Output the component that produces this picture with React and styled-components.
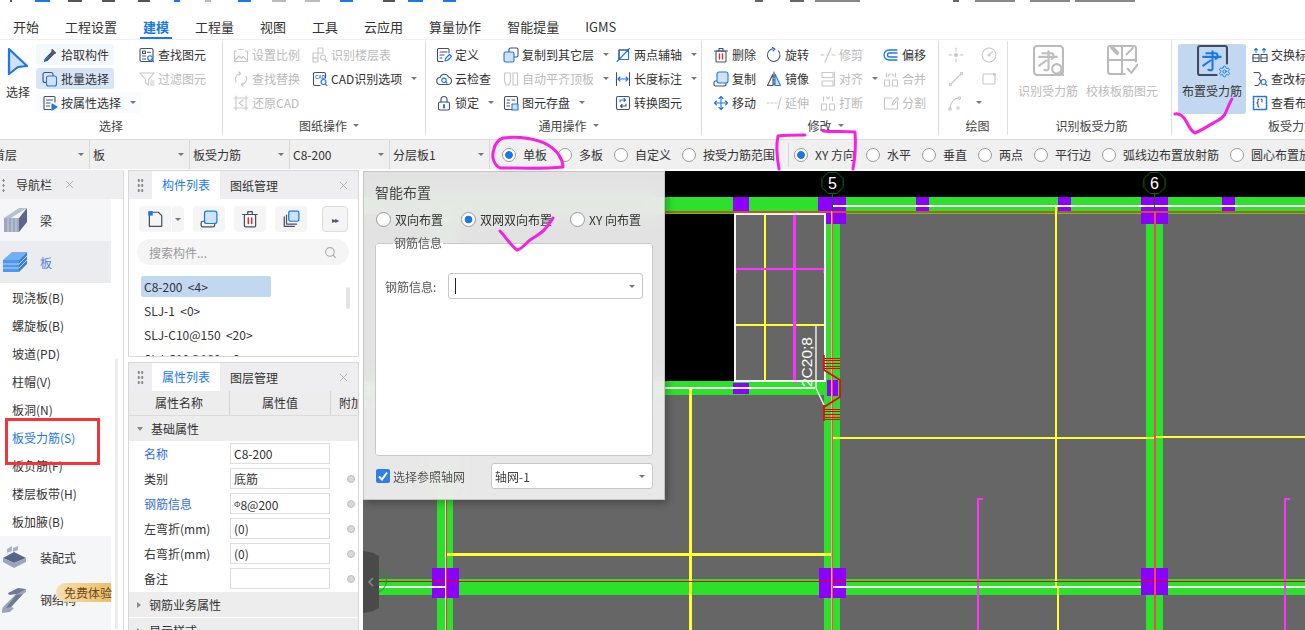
import React from 'react'
import styled, { createGlobalStyle } from 'styled-components'
import { X, Search, Settings } from 'lucide-react'

const GlobalStyle = createGlobalStyle`
  html, body { margin: 0; padding: 0; background: #fff; }
  body { font-family: "Noto Sans CJK SC", "Noto Sans", sans-serif; font-size: 12px; color: #333; }
  * { box-sizing: border-box; }
`

const BLUE = '#1a78e8'
const PALE = '#cfe2f8'

const Svg = ({ children, size = 16, box = 16 }) => (
  <svg width={size} height={size} viewBox={`0 0 ${box} ${box}`} fill="none" stroke="currentColor" strokeWidth="1.1" strokeLinecap="round" strokeLinejoin="round">
    {children}
  </svg>
)

const icons = {
  pick: <><path d="M10 2.5l3.5 3.5-2 1-6.5 6.5-2.5.8.8-2.5L10 5z" fill="#56607a" /><path d="M3 13l3-3" stroke={BLUE} strokeWidth="1.6" /></>,
  batch: <><rect x="1" y="1.5" width="10" height="10" rx="2" /><rect x="4.5" y="5" width="10" height="10" rx="2" fill={PALE} stroke={BLUE} /></>,
  attr: <><path d="M13 7V2.5a1 1 0 0 0-1-1H3a1 1 0 0 0-1 1v11a1 1 0 0 0 1 1h6" /><path d="M4.5 5h6M4.5 8h3.5M4.5 11h3" /><path d="M10 9l5 3-5 3z" fill={BLUE} stroke={BLUE} /></>,
  find: <><rect x="1" y="1.5" width="13" height="13" rx="1.5" /><rect x="3.5" y="4" width="3" height="2.5" /><path d="M8.5 5.2h3M3.5 9h3M3.5 12h3" /><circle cx="11" cy="11" r="2.3" fill="#fff" stroke={BLUE} /><path d="M12.8 12.8l1.8 1.8" stroke={BLUE} /></>,
  filter: <><path d="M1 2h14L9.5 8.5V14L6.5 12V8.5z" /><path d="M11.5 10h3.5M11.5 12h3.5M11.5 14h3.5" /></>,
  scale: <><path d="M1.5 4v10.5h13V4M1.5 4h2M12.5 4h2M6 2.5h4" /><path d="M2 13l4-4 2.5 2.5 2-2 3 3.5" /></>,
  replace: <><path d="M3 11a6 6 0 0 1 4-8.5M13 5a6 6 0 0 1-4 8.5" /><path d="M6 1l1.5 1.5L6 4M10 12l-1.5 1.5L10 15" /></>,
  restore: <><path d="M3 1v14M13 1v14M1 3h14M1 13h14" /><path d="M10 5L6 8l4 3" /></>,
  floorTable: <><rect x="6" y="1" width="5" height="5" /><rect x="1" y="6" width="5" height="5" /><rect x="1" y="11" width="5" height="4" /><circle cx="11" cy="10.5" r="2.5" /><path d="M13 12.5l2 2" /></>,
  cadOpt: <><path d="M13.5 7V3a1.5 1.5 0 0 0-1.5-1.5H3A1.5 1.5 0 0 0 1.5 3v10A1.5 1.5 0 0 0 3 14.5h5" /><text x="3" y="7.5" fontSize="4.6" fontWeight="700" fill={BLUE} stroke="none" fontFamily="Liberation Sans, sans-serif">CAD</text><circle cx="11.5" cy="11" r="2.5" stroke={BLUE} /><path d="M13.3 12.9l1.7 1.7" stroke={BLUE} /></>,
  define: <><path d="M13 6V2.5a1 1 0 0 0-1-1H2.5a1 1 0 0 0-1 1v11a1 1 0 0 0 1 1H7" /><path d="M4 5h7M4 8h4M4 11h2" /><path d="M9 14l.5-2.5 4-4 2 2-4 4z" stroke={BLUE} /></>,
  cloud: <><path d="M4.5 13.5a3.5 3.5 0 0 1-.5-7A4.5 4.5 0 0 1 12.5 6a3.8 3.8 0 0 1-.5 7.5z" /><circle cx="8" cy="9.3" r="2.2" stroke={BLUE} /><path d="M9.7 11l1.3 1.2" stroke={BLUE} /></>,
  lock: <><path d="M5 7V4.5a3 3 0 0 1 6 0V7" /><rect x="2.5" y="7" width="11" height="8" rx="1.5" /><path d="M8 10v2.5" stroke={BLUE} strokeWidth="2" /></>,
  copyFloor: <><rect x="6" y="1" width="9" height="9" rx="1.5" /><rect x="1" y="5" width="10" height="10" rx="1.5" fill={PALE} stroke={BLUE} /></>,
  autoAlign: <><path d="M1.5 2h6v8l-1.5 4H3L1.5 10zM10 2h4.5v12H10z" /></>,
  save: <><rect x="1.5" y="1.5" width="13" height="13" rx="1.5" /><path d="M4 5h2.5M9 5h3M4 8h2.5M4 11h2.5" /><rect x="9" y="9" width="6" height="6" fill={PALE} stroke={BLUE} /></>,
  twoPoint: <><path d="M4 3h9.5v9.5H4zM2 14.5L14.5 1.5" stroke={BLUE} /><path d="M4 3h9.5M4 12.5V3" /></>,
  length: <><path d="M1.5 1.5v13M14.5 1.5v13" /><path d="M3 8h10M5 6L3 8l2 2M11 6l2 2-2 2" stroke={BLUE} /></>,
  convert: <><rect x="1.5" y="1.5" width="13" height="13" rx="1.5" /><path d="M5 7V5h5M9 3.5L10.5 5 9 6.5" stroke={BLUE} /><path d="M11 9v2H6M7 9.5L5.5 11 7 12.5" /></>,
  del: <><rect x="3" y="4" width="10" height="11" rx="1" /><path d="M1.5 4h13M6 4V1.5h4V4" /><path d="M6.5 7v5M9.5 7v5" stroke="#e5262c" strokeWidth="1.3" /></>,
  rotate: <><path d="M12.5 4A6.3 6.3 0 1 1 8 1.8" /><path d="M6.5 0.5L9 2 7 4" stroke={BLUE} /></>,
  trim: <><path d="M5 15L11 1M1 8h3M7 8h2M12 8h3" /></>,
  copy: <><path d="M4 10H2.5A1.5 1.5 0 0 0 1 11.5v2A1.5 1.5 0 0 0 2.5 15h9a1.5 1.5 0 0 0 1.5-1.500V12" /><rect x="4" y="1" width="11" height="11" rx="2" fill={PALE} stroke={BLUE} /></>,
  mirror: <><path d="M7 3L1.500 14.500H7z" /><path d="M9 3l5.500 11.500H9z" fill={PALE} stroke={BLUE} /><path d="M8 1v14" strokeDasharray="2 1.500" /></>,
  align: <><rect x="2" y="1.500" width="11" height="5" /><rect x="2" y="10" width="11" height="5" /><path d="M14.500 1v14" /></>,
  move: <g stroke={BLUE}><path d="M8 1.500v13M1.500 8h13M6 3.500L8 1.500l2 2M6 12.500l2 2 2-2M3.500 6L1.500 8l2 2M12.500 6l2 2-2 2" /></g>,
  extend: <><path d="M1 8h2M5 8h2M9 8h2M12 14L15 2" /></>,
  breakIt: <><rect x="1.500" y="9" width="5" height="6" /><rect x="9.500" y="9" width="5" height="6" /><path d="M3.500 6V2M12.500 6V2M6.500 2L8 4M9.500 2L8 4" /></>,
  offset: <g stroke={BLUE}><path d="M14 3H6a5 5 0 0 0 0 10h8" strokeWidth="1.300" /><path d="M14 6H6.500a2 2 0 0 0 0 4H14" strokeWidth="1.300" /></g>,
  merge: <><rect x="1.500" y="9" width="5" height="6" /><rect x="9.500" y="9" width="5" height="6" /><path d="M3.500 2v4M12.500 2v4M5 5l2-2M11 5L9 3" /></>,
  split: <><path d="M9 3H1.500v11h13V7" /><path d="M9 10l1-3 4-4.500 1.500 1.500L11 9z" /></>,
  point: <><circle cx="8" cy="8" r="1.500" fill="currentColor" /><path d="M8 1v3M8 12v3M1 8h3M12 8h3" /></>,
  circle: <><circle cx="8" cy="8" r="7" /><circle cx="8" cy="8" r="1" /><path d="M8 8l3.500-3.500" /></>,
  line: <><path d="M3 13L13 3" /><circle cx="2.500" cy="13.500" r="1.200" /><circle cx="13.500" cy="2.500" r="1.200" /></>,
  rect: <><rect x="2" y="3" width="12" height="10" rx="1" /><circle cx="13.500" cy="3.500" r="1" /></>,
  arc: <><path d="M2 14C2 8 6 3 11 3" /><circle cx="2" cy="14" r="1.200" /><circle cx="11.500" cy="3" r="1.200" /><circle cx="10" cy="13" r="1.200" /></>,
  swap: <><rect x="1" y="7.500" width="6" height="7" /><rect x="9" y="7.500" width="6" height="7" /><path d="M1 11h6M9 11h6" /><path d="M4 1.500v4M2.500 3L4 1.500 5.500 3M12 1.500v4M10.500 3L12 1.500 13.500 3" stroke={BLUE} /></>,
  edit: <><path d="M2 1.500h5l2 3-2 3 2 3-3 4H3" /><circle cx="11.500" cy="11" r="2.500" stroke={BLUE} /><path d="M13.300 12.800l1.700 1.700" stroke={BLUE} /></>,
  look: <><rect x="1.500" y="1.500" width="13" height="13" stroke={BLUE} strokeDasharray="1.500 1.200" strokeWidth="1.600" /><path d="M7 4c-1.500 0-1 2-1 3l-1 1 1 1c0 1-.5 3 1 3M9 4c1.500 0 1 2 1 3" /></>,
}

const TopStrip = () => (
  <StripSvg width="1305" height="3" viewBox="0 0 1305 3">
    {[[10, 2, '#555'], [35, 15, BLUE], [68, 14, '#555'], [102, 13, '#555'], [138, 12, '#555'], [174, 6, BLUE], [205, 6, '#bbb'], [238, 13, BLUE], [272, 14, '#bbb'], [305, 15, '#bbb'], [340, 13, BLUE], [383, 12, '#555'], [408, 15, BLUE], [443, 13, BLUE], [755, 8, '#666'], [790, 14, '#666'], [815, 45, '#888'], [953, 6, '#666'], [975, 40, '#888'], [1030, 40, '#888'], [1075, 60, '#888']].map(([x, w, c]) => (
      <rect key={x} x={x} y="0" width={w} height="2" fill={c} />
    ))}
  </StripSvg>
)

const Tool = ({ icon, off, caret, tone, children }) => (
  <ToolRow $tone={tone} $off={off}>
    <ToolIcon $off={off}><Svg>{icons[icon]}</Svg></ToolIcon>
    <span>{children}</span>
    {caret && <Caret $pad />}
  </ToolRow>
)

const GroupTitle = ({ children, caret }) => (
  <GroupLabel>{children}{caret && <Caret $pad />}</GroupLabel>
)

const BigGlyph = ({ color }) => (
  <path d="M6 11.500h17M9 8h9c2 0 3 4 0 5.500M15 6v17c0 1.500-1.500 2-4 1M6 20l7-5" stroke={color} strokeWidth="2" fill="none" />
)

const tabs = ['开始', '工程设置', '建模', '工程量', '视图', '工具', '云应用', '算量协作', '智能提量', 'IGMS']

const Ribbon = () => (
  <RibbonBar>
    <Group $w={223}>
      <GroupBody>
        <SelectCol>
          <svg width="22" height="28" viewBox="0 0 22 28">
            <path d="M2 2l18 17-9 1-9 7z" fill={PALE} stroke={BLUE} strokeWidth="2.200" strokeLinejoin="round" />
          </svg>
          <span>选择</span>
        </SelectCol>
        <Col $w={103}>
          <Tool icon="pick" tone="soft">拾取构件</Tool>
          <Tool icon="batch" tone="on">批量选择</Tool>
          <Tool icon="attr" tone="ghost" caret>按属性选择</Tool>
        </Col>
        <Col $w={79}>
          <Tool icon="find">查找图元</Tool>
          <Tool icon="filter" off>过滤图元</Tool>
        </Col>
      </GroupBody>
      <GroupTitle>选择</GroupTitle>
    </Group>
    <Group $w={203} $pad={10}>
      <GroupBody>
        <Col $w={79}>
          <Tool icon="scale" off>设置比例</Tool>
          <Tool icon="replace" off>查找替换</Tool>
          <Tool icon="restore" off>还原CAD</Tool>
        </Col>
        <Col $w={110}>
          <Tool icon="floorTable" off>识别楼层表</Tool>
          <Tool icon="cadOpt" caret>CAD识别选项</Tool>
        </Col>
      </GroupBody>
      <GroupTitle caret>图纸操作</GroupTitle>
    </Group>
    <Group $w={276} $pad={10}>
      <GroupBody>
        <Col $w={67}>
          <Tool icon="define">定义</Tool>
          <Tool icon="cloud">云检查</Tool>
          <Tool icon="lock" caret>锁定</Tool>
        </Col>
        <Col $w={112}>
          <Tool icon="copyFloor" caret>复制到其它层</Tool>
          <Tool icon="autoAlign" off caret>自动平齐顶板</Tool>
          <Tool icon="save" caret>图元存盘</Tool>
        </Col>
        <Col $w={84}>
          <Tool icon="twoPoint" caret>两点辅轴</Tool>
          <Tool icon="length" caret>长度标注</Tool>
          <Tool icon="convert">转换图元</Tool>
        </Col>
      </GroupBody>
      <GroupTitle caret>通用操作</GroupTitle>
    </Group>
    <Group $w={237} $pad={11}>
      <GroupBody>
        <Col $w={53}>
          <Tool icon="del">删除</Tool>
          <Tool icon="copy">复制</Tool>
          <Tool icon="move">移动</Tool>
        </Col>
        <Col $w={54}>
          <Tool icon="rotate">旋转</Tool>
          <Tool icon="mirror">镜像</Tool>
          <Tool icon="extend" off>延伸</Tool>
        </Col>
        <Col $w={63}>
          <Tool icon="trim" off>修剪</Tool>
          <Tool icon="align" off caret>对齐</Tool>
          <Tool icon="breakIt" off>打断</Tool>
        </Col>
        <Col $w={50}>
          <Tool icon="offset">偏移</Tool>
          <Tool icon="merge" off>合并</Tool>
          <Tool icon="split" off>分割</Tool>
        </Col>
      </GroupBody>
      <GroupTitle caret>修改</GroupTitle>
    </Group>
    <Group $w={69} $pad={9}>
      <GroupBody>
        <Col $w={33}>
          <Tool icon="point" off />
          <Tool icon="line" off />
          <Tool icon="arc" off caret />
        </Col>
        <Col $w={20}>
          <Tool icon="circle" off />
          <Tool icon="rect" off />
        </Col>
      </GroupBody>
      <GroupTitle>绘图</GroupTitle>
    </Group>
    <Group $w={164} $pad={4}>
      <GroupBody>
        <BigTool $w={72} $off>
          <Svg size={31} box={30}>
            <rect x="1" y="1" width="28" height="28" rx="3" strokeWidth="2" />
            <BigGlyph color="#bdbdbd" />
            <circle cx="23" cy="23" r="4.500" fill="#fff" strokeWidth="2" />
            <path d="M26 26l3.500 3.500" strokeWidth="2" />
          </Svg>
          <span>识别受力筋</span>
        </BigTool>
        <BigTool $w={76} $off>
          <Svg size={31} box={30}>
            <path d="M28 16V3a2 2 0 0 0-2-2H3a2 2 0 0 0-2 2v23a2 2 0 0 0 2 2h14M1 14.500h27M14.500 1v27M4 3l6 6M5 1.500l6 6M25 3l-6 6" strokeWidth="2" />
            <path d="M20 23l3.500 4 6-8" strokeWidth="2" />
          </Svg>
          <span>校核板筋图元</span>
        </BigTool>
      </GroupBody>
      <GroupTitle>识别板受力筋</GroupTitle>
    </Group>
    <LastGroup>
      <GroupBody>
        <BigTool $w={68} $on>
          <BigIconWrap>
            <Svg size={31} box={30}>
              <path d="M19 29H3a2 2 0 0 1-2-2V3a2 2 0 0 1 2-2h24a2 2 0 0 1 2 2v15" strokeWidth="2" stroke="#3f4a63" />
              <BigGlyph color={BLUE} />
            </Svg>
            <GearSpot><Settings size={13} color={BLUE} strokeWidth={1.800} /></GearSpot>
          </BigIconWrap>
          <span>布置受力筋</span>
        </BigTool>
        <Col $w={70} $gap>
          <Tool icon="swap">交换标注</Tool>
          <Tool icon="edit">查改标注</Tool>
          <Tool icon="look">查看布筋</Tool>
        </Col>
      </GroupBody>
      <GroupLabel $left>板受力筋</GroupLabel>
    </LastGroup>
  </RibbonBar>
)

const selects = ['首层', '板', '板受力筋', 'C8-200', '分层板1']
const radios = [
  ['单板', true], ['多板'], ['自定义'], ['按受力筋范围'], null,
  ['XY 方向', true], ['水平'], ['垂直'], ['两点'], ['平行边'], ['弧线边布置放射筋'], ['圆心布置放射筋'],
]

const OptionBar = () => (
  <OptionStrip>
    {selects.map((s, i) => (
      <SelectCell key={s} $first={i === 0}>
        <span>{s}</span>
        <Caret />
      </SelectCell>
    ))}
    <RadioWrap>
      {radios.map((r, i) => r === null ? <OptionSep key={i} /> : (
        <RadioItem key={r[0]}>
          <Radio $on={r[1]} />
          <span>{r[0]}</span>
        </RadioItem>
      ))}
    </RadioWrap>
  </OptionStrip>
)

const subItems = ['现浇板(B)', '螺旋板(B)', '坡道(PD)', '柱帽(V)', '板洞(N)', '板受力筋(S)', '板负筋(F)', '楼层板带(H)', '板加腋(B)']

const Beam = () => (
  <svg width="25" height="26" viewBox="0 0 25 26">
    <path d="M2 11L17 1h8L9 11z" fill="#b8c1d4" />
    <path d="M2 11h15v14H2z" fill="#9ba7c0" />
    <path d="M17 11l8-10v14l-8 10z" fill="#59688a" />
    <path d="M6 11v14M10 11v14M14 11v14" stroke="#c9d0de" />
  </svg>
)

const Slab = () => (
  <svg width="25" height="22" viewBox="0 0 25 22">
    <path d="M1 9l9-8h15l-8 8z" fill="#72b0f5" />
    <path d="M1 9h16v12H1z" fill="#4e96ee" />
    <path d="M17 9l8-8v12l-8 8z" fill="#3d7fd8" />
    <path d="M1 13h16l8-8M1 17h16l8-8" stroke="#b6d6fa" fill="none" />
  </svg>
)

const Prefab = () => (
  <svg width="25" height="24" viewBox="0 0 25 24">
    <path d="M5 4l5-3v5l-5 2zM11 3l5-2v4l-5 2z" fill="#aab3c6" />
    <path d="M1 13l11-6 12 6-12 5z" fill="#56658a" />
    <path d="M1 13v4l11 6 12-6v-4l-12 5z" fill="#9aa6bf" />
  </svg>
)

const Steel = () => (
  <svg width="25" height="26" viewBox="0 0 25 26">
    <path d="M1 20L16 5l8-3v3l-3 2-12 13 3 1-4 4-8 1v-3z" fill="#9aa5bb" />
    <path d="M6 6l10-5 8 1-9 5-8 1zM14 8l7-1-12 13-5 1z" fill="#6d7a96" />
  </svg>
)

const Nav = () => (
  <NavPane>
    <NavHead>
      <Grip $one />
      <span>导航栏</span>
      <CloseBtn><X size={13} strokeWidth={1.300} /></CloseBtn>
    </NavHead>
    <NavBody>
      <NavList>
        <NavBig><NavIcon><Beam /></NavIcon><span>梁</span></NavBig>
        <NavBig $on><NavIcon><Slab /></NavIcon><span>板</span></NavBig>
        <SubGap />
        {subItems.map(s => <NavSub key={s} $on={s.startsWith('板受力筋')}>{s}</NavSub>)}
        <NavBig $tail><NavIcon><Prefab /></NavIcon><span>装配式</span></NavBig>
        <NavBig $tail><NavIcon><Steel /></NavIcon><span>钢结构</span></NavBig>
        <NavFill />
      </NavList>
      <NavScroll />
    </NavBody>
    <FreeBadge>免费体验</FreeBadge>
  </NavPane>
)

const PanelHeader = ({ active, other }) => (
  <PanelHead>
    <GripSlot><Grip /></GripSlot>
    <TabOn>{active}</TabOn>
    <TabOff>{other}</TabOff>
    <CloseBtn><X size={13} strokeWidth={1.300} /></CloseBtn>
  </PanelHead>
)

const rows = [
  ['名称', 'C8-200', true, false],
  ['类别', '底筋', false, true],
  ['钢筋信息', '8@200', true, true, true],
  ['左弯折(mm)', '(0)', false, true],
  ['右弯折(mm)', '(0)', false, true],
  ['备注', '', false, true],
]

const Panels = () => (
  <PanelCol>
    <ListPanel>
      <PanelHeader active="构件列表" other="图纸管理" />
      <ListTools>
        <SplitBtn>
          <SplitMain>
            <Svg size={18}>
              <path d="M3 2h8l3 3v9.500H3z" />
              <rect x="2" y="1" width="4" height="4" fill={BLUE} stroke="none" />
            </Svg>
          </SplitMain>
          <SplitDrop><Caret /></SplitDrop>
        </SplitBtn>
        <ListBtn><Svg size={18}>{icons.copy}</Svg></ListBtn>
        <ListBtn><Svg size={18}>{icons.del}</Svg></ListBtn>
        <ListBtn>
          <Svg size={18}>
            <path d="M2 6v8.500h9M4 4.500v8h9" />
            <rect x="6" y="1" width="9" height="9" rx="1.500" fill={PALE} stroke={BLUE} />
          </Svg>
        </ListBtn>
        <MoreBtn>▸▸</MoreBtn>
      </ListTools>
      <SearchBox>
        <span>搜索构件...</span>
        <Search size={13} color="#aaa" />
      </SearchBox>
      <CompList>
        <CompRow $on>{'C8-200  <4>'}</CompRow>
        <CompRow>{'SLJ-1  <0>'}</CompRow>
        <CompRow>{'SLJ-C10@150  <20>'}</CompRow>
        <CompRow>{'SLJ-C10@180  <6>'}</CompRow>
      </CompList>
      <ListThumb />
    </ListPanel>
    <PropPanel>
      <PanelHeader active="属性列表" other="图层管理" />
      <PropHead>
        <PropHeadCell>属性名称</PropHeadCell>
        <PropHeadCell>属性值</PropHeadCell>
        <PropHeadCell $last>附加</PropHeadCell>
      </PropHead>
      <PropGroup><GroupArrow $open />基础属性</PropGroup>
      {rows.map(([name, value, link, dot, rebar]) => (
        <PropRow key={name}>
          <PropName $link={link}>{name}</PropName>
          <PropValue>{rebar && <RebarMark>Φ</RebarMark>}{value}</PropValue>
          {dot && <PropDot />}
        </PropRow>
      ))}
      <PropGroup $gap><GroupArrow />钢筋业务属性</PropGroup>
      <PropGroup $gap><GroupArrow />显示样式</PropGroup>
    </PropPanel>
  </PanelCol>
)

const GREEN = '#2ce02c'
const PURPLE = '#8b00ff'
const YELLOW = '#ffff33'
const MAGENTA = '#ff33ff'
const WHITE = '#f4f4f4'

const octagon = (cx, cy, r) => Array.from({ length: 8 }, (_, i) => {
  const a = Math.PI / 8 + i * Math.PI / 4
  return `${(cx + r * Math.cos(a)).toFixed(1)},${(cy + r * Math.sin(a)).toFixed(1)}`
}).join(' ')

const stirrups = (ys) => ys.map(y => <path key={y} d={`M824 ${y}H840`} stroke="#f00000" strokeWidth="1" />)

const Drawing = () => (
  <svg width="942" height="459" viewBox="363 171 942 459" shapeRendering="crispEdges" style={{ display: 'block' }}>
    <rect x="363" y="171" width="942" height="459" fill="#666" />
    <rect x="363" y="171" width="942" height="26" fill="#000" />
    <rect x="363" y="214" width="372" height="167" fill="#000" />

    <g fill={GREEN}>
      <rect x="363" y="197" width="942" height="17" />
      <rect x="363" y="381" width="477" height="14" />
      <rect x="379" y="579" width="926" height="16" />
      <rect x="437" y="197" width="16" height="433" />
      <rect x="824" y="214" width="16" height="416" />
      <rect x="1146" y="197" width="17" height="433" />
    </g>

    <g fill={PURPLE}>
      <rect x="733" y="197" width="16" height="14" />
      <rect x="733" y="383" width="16" height="11" />
      <rect x="818" y="197" width="28" height="27" />
      <rect x="916" y="197" width="13" height="14" />
      <rect x="827" y="380" width="11" height="16" />
      <rect x="1058" y="197" width="13" height="14" />
      <rect x="1141" y="197" width="27" height="27" />
      <rect x="1222" y="197" width="13" height="14" />
      <rect x="432" y="568" width="27" height="30" />
      <rect x="819" y="568" width="27" height="30" />
      <rect x="1141" y="568" width="27" height="27" />
    </g>

    <rect x="363" y="211" width="942" height="1.500" fill="#c2561c" />
    <rect x="832" y="205" width="473" height="1.500" fill="#fff" />
    <rect x="363" y="387" width="452" height="2" fill={WHITE} />
    <rect x="379" y="586" width="66" height="2" fill={WHITE} />
    <rect x="833" y="586" width="13" height="2" fill={WHITE} />
    <rect x="846" y="586" width="295" height="2" fill={WHITE} />
    <rect x="1168" y="586" width="137" height="2" fill={WHITE} />

    <g fill="#666"><rect x="736" y="215" width="88" height="165" /></g>

    <g fill={YELLOW}>
      <rect x="764" y="214" width="2" height="167" />
      <rect x="735" y="324" width="90" height="2" />
      <rect x="689" y="389" width="3" height="241" />
      <rect x="446" y="553" width="385" height="3" />
      <rect x="833" y="437" width="313" height="2" />
      <rect x="1146" y="437" width="8" height="2" />
      <rect x="1155" y="436" width="150" height="2" />
      <rect x="1055" y="206" width="2" height="380" />
      <rect x="1057" y="586" width="2" height="44" />
    </g>

    <g fill={MAGENTA}>
      <rect x="793" y="213" width="3" height="169" />
      <rect x="735" y="268" width="90" height="2" />
      <rect x="735" y="268" width="2" height="5" />
      <rect x="823" y="268" width="2" height="5" />
      <rect x="793" y="381" width="6" height="2" />
      <rect x="795" y="212" width="4" height="2" />
      <rect x="977" y="499" width="2" height="131" />
      <rect x="977" y="498" width="6" height="2" />
      <rect x="1284" y="499" width="2" height="131" />
      <rect x="1284" y="498" width="6" height="2" />
    </g>

    <rect x="735" y="214" width="90" height="167" fill="none" stroke={WHITE} strokeWidth="1.500" />

    <g>
      <rect x="379" y="581" width="926" height="1" fill="#e60000" />
      <rect x="445" y="197" width="1" height="433" fill="#fff" />
      <rect x="446" y="197" width="1" height="433" fill="#f23030" />
      <rect x="831" y="211" width="1" height="419" fill="#ffa0a0" />
      <rect x="832" y="211" width="1" height="419" fill="#ff4a4a" />
      <rect x="1154" y="211" width="2" height="419" fill="#ff3f60" />
      <rect x="832" y="194" width="1" height="17" fill="#0a6a0a" />
      <rect x="1154" y="194" width="1" height="17" fill="#0a6a0a" />
    </g>

    <g shapeRendering="auto">
      <polygon points={octagon(832.500, 183, 11.500)} fill="none" stroke="#0b6d0b" />
      <polygon points={octagon(1154.500, 183, 11.500)} fill="none" stroke="#0b6d0b" />
      <circle cx="375" cy="581" r="11.500" fill="none" stroke="#0fa30f" />
      <DrawText x="832.500" y="189" textAnchor="middle" fontSize="16">5</DrawText>
      <DrawText x="1154.500" y="189" textAnchor="middle" fontSize="16">6</DrawText>
      <DrawText transform="translate(812 387) rotate(-90)" fontSize="15.500">2C20;8</DrawText>
      <path d="M816 324V388L824 405" stroke={WHITE} strokeWidth="1.400" fill="none" />
      <path d="M824 355V370L840 380V397L824 407" stroke="#f00000" strokeWidth="1.600" fill="none" />
      <path d="M824 405V421" stroke="#f00000" strokeWidth="1.600" fill="none" />
    </g>
    {stirrups([358, 360, 363, 366, 368, 409, 411, 414, 417, 419])}
  </svg>
)

const Dialog = () => (
  <DialogBox>
    <DialogTitle>智能布置</DialogTitle>
    <DialogRadios>
      <RadioItem><Radio /><span>双向布置</span></RadioItem>
      <RadioItem><Radio $on /><span>双网双向布置</span></RadioItem>
      <RadioItem><Radio /><span>XY 向布置</span></RadioItem>
    </DialogRadios>
    <RebarSet>
      <RebarLegend>钢筋信息</RebarLegend>
      <FieldRow>
        <FieldLabel>钢筋信息:</FieldLabel>
        <Combo $w={195}><TextCursor /><Caret /></Combo>
      </FieldRow>
    </RebarSet>
    <DialogFoot>
      <CheckWrap>
        <CheckBox>
          <svg width="12" height="12" viewBox="0 0 12 12"><path d="M2 6.500l3 3 5-7" stroke="#fff" strokeWidth="2" fill="none" /></svg>
        </CheckBox>
        <span>选择参照轴网</span>
      </CheckWrap>
      <Combo $w={162}><ComboText>轴网-1</ComboText><Caret /></Combo>
    </DialogFoot>
  </DialogBox>
)

const Scribbles = () => (
  <ScribbleLayer width="1305" height="630" viewBox="0 0 1305 630" fill="none" stroke="#f522e2" strokeWidth="3" strokeLinecap="round" strokeLinejoin="round">
    <path d="M503 138C520 136 538 139 548 145C558 151 563 160 563 167C545 169 520 168 500 168C494 165 491 157 494 149C495 144 498 140 503 138" />
    <path d="M805 135C795 135 785 135 778 136C776 145 777 158 779 169M823 131C832 132 845 131 855 132C856 145 855 158 853 169" />
    <path d="M1175 114C1180 113 1183 116 1186 121C1189 127 1192 132 1195 133C1202 130 1210 125 1215 122C1221 119 1224 117 1226 112C1228 107 1230 102 1232 99" />
    <path d="M500 231C505 236 511 246 517 250C522 249 526 243 530 240C537 235 542 233 545 229C549 225 551 221 553 218" />
    <RedBox x="6.500" y="419.500" width="92" height="44" />
  </ScribbleLayer>
)

export default function App() {
  return (
    <Page>
      <GlobalStyle />
      <TopStrip />
      <TabBar>
        {tabs.map(t => <MenuTab key={t} $on={t === '建模'}>{t}</MenuTab>)}
      </TabBar>
      <Ribbon />
      <OptionBar />
      <Main>
        <Nav />
        <Panels />
        <Canvas>
          <Drawing />
          <Handle><svg width="8" height="12" viewBox="0 0 8 12"><path d="M6 2L2 6l4 4" stroke="#8a8a8a" strokeWidth="1.500" fill="none" /></svg></Handle>
          <Dialog />
        </Canvas>
      </Main>
      <Scribbles />
    </Page>
  )
}

const Page = styled.div`
  position: relative;
  width: 1305px;
  height: 630px;
  overflow: hidden;
  background: #fff;
`

const StripSvg = styled.svg`
  display: block;
`

const TabBar = styled.div`
  display: flex;
  gap: 26px;
  height: 36px;
  padding: 11px 0 0 13px;
`

const MenuTab = styled.div`
  position: relative;
  height: 25px;
  line-height: 25px;
  font-size: 13px;
  color: ${p => (p.$on ? BLUE : '#333')};
  font-weight: ${p => (p.$on ? 700 : 400)};
  &::after {
    content: '';
    display: ${p => (p.$on ? 'block' : 'none')};
    position: absolute;
    left: -3px;
    right: -3px;
    bottom: 0;
    height: 2px;
    background: ${BLUE};
  }
`

const RibbonBar = styled.div`
  display: flex;
  height: 101px;
  border-top: 1px solid #f0f0f0;
  border-bottom: 1px solid #dcdcdc;
  overflow: hidden;
`

const Group = styled.div`
  display: flex;
  flex-direction: column;
  justify-content: space-between;
  flex: none;
  width: ${p => p.$w}px;
  padding-left: ${p => p.$pad || 0}px;
  height: 94px;
  margin-top: 1px;
  border-right: 1px solid #dedede;
`

const LastGroup = styled(Group)`
  width: auto;
  flex: 1;
  padding-left: 6px;
  border-right: 0;
`

const GroupBody = styled.div`
  display: flex;
  padding-top: 3px;
`

const GroupLabel = styled.div`
  display: flex;
  align-items: center;
  justify-content: ${p => (p.$left ? 'flex-start' : 'center')};
  padding-left: ${p => (p.$left ? '90px' : '0')};
  white-space: nowrap;
  height: 20px;
  margin-top: -6px;
  color: #444;
`

const SelectCol = styled.div`
  display: flex;
  flex-direction: column;
  align-items: center;
  flex: none;
  width: 36px;
  padding-top: 3px;
  span { margin-top: 8px; }
`

const Col = styled.div`
  display: flex;
  flex-direction: column;
  gap: 3px;
  flex: none;
  width: ${p => p.$w}px;
  margin-left: ${p => (p.$gap ? '6px' : '0')};
  white-space: nowrap;
`

const ToolRow = styled.div`
  display: flex;
  align-items: center;
  gap: 3px;
  height: 21px;
  width: fit-content;
  border-radius: 3px;
  padding: ${p => (p.$tone ? '0 5px 0 6px' : '0')};
  color: ${p => (p.$off ? '#bbb' : '#333')};
  background: ${p => ({ soft: '#f3f8fd', on: '#d6e6f8', ghost: '#f9fbfe' }[p.$tone] || 'transparent')};
`

const ToolIcon = styled.span`
  display: flex;
  flex: none;
  color: ${p => (p.$off ? '#c8c8c8' : '#44506a')};
`

const Caret = styled.i`
  display: inline-block;
  flex: none;
  width: 0;
  height: 0;
  margin-left: ${p => (p.$pad ? '6px' : 'auto')};
  border-left: 3px solid transparent;
  border-right: 3px solid transparent;
  border-top: 3px solid #777;
`

const BigTool = styled.div`
  display: flex;
  flex-direction: column;
  align-items: center;
  flex: none;
  gap: 6px;
  width: ${p => p.$w}px;
  height: 70px;
  padding-top: 1px;
  border-radius: 3px;
  white-space: nowrap;
  background: ${p => (p.$on ? '#c2d8f0' : 'transparent')};
  color: ${p => (p.$off ? '#bbb' : '#333')};
`

const BigIconWrap = styled.div`
  position: relative;
  height: 31px;
`

const GearSpot = styled.span`
  position: absolute;
  right: -3px;
  bottom: -2px;
  display: flex;
`

const OptionStrip = styled.div`
  display: flex;
  align-items: center;
  height: 30px;
  background: #f0f0f0;
  border-bottom: 1px solid #fff;
  overflow: hidden;
`

const SelectCell = styled.div`
  display: flex;
  align-items: center;
  flex: none;
  width: 100px;
  height: 100%;
  margin-left: ${p => (p.$first ? '-10px' : '0')};
  padding: 0 5px 0 3px;
  border-right: 1px solid #d8d8d8;
  color: #333;
`

const RadioWrap = styled.div`
  display: flex;
  align-items: center;
  gap: 11px;
  padding-left: 12px;
  height: 100%;
  white-space: nowrap;
`

const OptionSep = styled.div`
  width: 1px;
  height: 24px;
  margin: 0 -6px 0 2px;
  background: #d4d4d4;
`

const RadioItem = styled.div`
  display: flex;
  align-items: center;
  flex: none;
  gap: 7px;
  white-space: nowrap;
  color: #333;
`

const Radio = styled.span`
  display: inline-block;
  flex: none;
  width: 14px;
  height: 14px;
  border-radius: 50%;
  border: 1px solid #9a9a9a;
  background: ${p => (p.$on ? `radial-gradient(circle, ${BLUE} 3.5px, #fff 4.2px)` : '#fff')};
`

const Main = styled.div`
  display: flex;
  height: 460px;
`

const NavPane = styled.div`
  position: relative;
  flex: none;
  width: 124px;
  border-right: 1px solid #dcdcdc;
  overflow: hidden;
`

const NavHead = styled.div`
  display: flex;
  align-items: center;
  height: 29px;
  padding-left: 2px;
  font-size: 12px;
  background: #eeeef0;
  span { margin-left: 11px; }
`

const Grip = styled.i`
  display: block;
  width: ${p => (p.$one ? 3 : 7)}px;
  height: 14px;
  background: radial-gradient(circle, #8a8a8a 1.1px, transparent 1.4px) 0 0 / 3.5px 5px;
`

const CloseBtn = styled.span`
  display: flex;
  margin-left: auto;
  margin-right: 8px;
  color: #999;
`

const NavBody = styled.div`
  display: flex;
  height: 431px;
`

const NavList = styled.div`
  display: flex;
  flex-direction: column;
  flex: none;
  width: 111px;
`

const NavBig = styled.div`
  display: flex;
  align-items: center;
  flex: none;
  height: ${p => (p.$tail ? '42.5px' : '42px')};
  background: ${p => (p.$on ? '#ebecef' : '#f5f6f8')};
  color: ${p => (p.$on ? '#4c84e0' : '#333')};
`

const NavIcon = styled.span`
  display: flex;
  justify-content: center;
  flex: none;
  width: 28px;
  margin-right: 12px;
`

const SubGap = styled.div`
  height: 1px;
`

const NavSub = styled.div`
  flex: none;
  height: 28px;
  line-height: 28px;
  padding-left: 12px;
  color: ${p => (p.$on ? BLUE : '#333')};
`

const NavFill = styled.div`
  flex: 1;
  background: #f5f6f8;
`

const NavScroll = styled.div`
  width: 3px;
  height: 270px;
  margin: 160px 0 0 4px;
  background: #ececec;
`

const FreeBadge = styled.div`
  position: absolute;
  left: 56px;
  top: 413px;
  width: 55px;
  height: 19px;
  line-height: 19px;
  padding-left: 8px;
  border-radius: 10px 0 0 10px;
  background: linear-gradient(90deg, #f7dfb0, #ecbd69);
  color: #6f4a12;
  white-space: nowrap;
`

const PanelCol = styled.div`
  display: flex;
  flex-direction: column;
  flex: none;
  gap: 5px;
  width: 231px;
  margin: 0 4px;
`

const PanelBox = styled.section`
  position: relative;
  overflow: hidden;
  border: 1px solid #d8d8d8;
  background: #fff;
`

const ListPanel = styled(PanelBox)`
  height: 187px;
  flex: none;
`

const PropPanel = styled(PanelBox)`
  flex: 1;
  border-bottom: 0;
`

const PanelHead = styled.div`
  display: flex;
  align-items: center;
  height: 28px;
  background: #eeeef0;
`

const GripSlot = styled.div`
  display: flex;
  justify-content: center;
  flex: none;
  width: 23px;
`

const TabOn = styled.div`
  flex: none;
  width: 68px;
  height: 100%;
  line-height: 28px;
  text-align: center;
  background: #fff;
  color: ${BLUE};
`

const TabOff = styled.div`
  padding-left: 10px;
  color: #333;
`

const ListTools = styled.div`
  display: flex;
  gap: 9px;
  padding: 7px 0 0 10px;
`

const SplitBtn = styled.div`
  display: flex;
  gap: 1px;
  height: 26px;
  border-radius: 4px;
  overflow: hidden;
`

const SplitMain = styled.div`
  display: flex;
  align-items: center;
  justify-content: center;
  width: 32px;
  color: #44506a;
  background: #f5f5f5;
`

const SplitDrop = styled.div`
  display: flex;
  align-items: center;
  justify-content: center;
  width: 12px;
  background: #f5f5f5;
  i { margin: 0; }
`

const ListBtn = styled.div`
  display: flex;
  align-items: center;
  justify-content: center;
  width: 32px;
  height: 26px;
  border-radius: 4px;
  color: #44506a;
  background: #f5f5f5;
`

const MoreBtn = styled(ListBtn)`
  width: 26px;
  margin-left: 6px;
  font-size: 8px;
  letter-spacing: -1px;
  border: 1px solid #dcdcdc;
`

const SearchBox = styled.div`
  display: flex;
  align-items: center;
  justify-content: space-between;
  width: 212px;
  height: 26px;
  margin: 7px 0 0 8px;
  padding: 0 12px;
  border-radius: 13px;
  color: #999;
  background: #f5f5f5;
`

const CompList = styled.div`
  display: flex;
  flex-direction: column;
  gap: 3px;
  margin: 11px 0 0 12px;
`

const CompRow = styled.div`
  flex: none;
  width: ${p => (p.$on ? '130px' : 'auto')};
  height: 21px;
  line-height: 21px;
  padding-left: 3px;
  border-radius: 2px;
  white-space: pre;
  color: #333;
  background: ${p => (p.$on ? '#c2d8f0' : 'transparent')};
`

const ListThumb = styled.div`
  position: absolute;
  right: 8px;
  top: 116px;
  width: 4px;
  height: 22px;
  border-radius: 2px;
  background: #e4e4e4;
`

const PropHead = styled.div`
  display: grid;
  grid-template-columns: 101px 101px 1fr;
  height: 25px;
  background: #ededed;
  border-bottom: 1px solid #dcdcdc;
`

const PropHeadCell = styled.div`
  line-height: 24px;
  text-align: ${p => (p.$last ? 'left' : 'center')};
  padding-left: ${p => (p.$last ? '8px' : '0')};
  white-space: nowrap;
  border-right: ${p => (p.$last ? '0' : '1px solid #d4d4d4')};
`

const PropGroup = styled.div`
  display: flex;
  align-items: center;
  height: 25px;
  margin-top: ${p => (p.$gap ? '1px' : '0')};
  padding-left: 8px;
  background: #ededed;
`

const GroupArrow = styled.i`
  display: block;
  width: 0;
  height: 0;
  margin-right: 8px;
  ${p => (p.$open
    ? 'border-left: 3px solid transparent; border-right: 3px solid transparent; border-top: 4px solid #888;'
    : 'border-top: 3px solid transparent; border-bottom: 3px solid transparent; border-left: 4px solid #888;')}
`

const PropRow = styled.div`
  display: grid;
  grid-template-columns: 101px 100px 1fr;
  align-items: center;
  height: 25px;
`

const PropName = styled.div`
  padding-left: 15px;
  white-space: nowrap;
  color: ${p => (p.$link ? '#2f6fe0' : '#333')};
`

const PropValue = styled.div`
  height: 21px;
  line-height: 19px;
  padding-left: 3px;
  border: 1px solid #dedede;
  color: #333;
`

const RebarMark = styled.span`
  display: inline-block;
  font-size: 8px;
  vertical-align: 3px;
`

const PropDot = styled.div`
  width: 8px;
  height: 8px;
  margin-left: 17px;
  border-radius: 50%;
  border: 1px solid #c0c0c0;
  background: #d8d8d8;
`

const Canvas = styled.div`
  position: relative;
  flex: 1;
  height: 460px;
  margin-top: 1px;
  overflow: hidden;
`

const DrawText = styled.text`
  fill: #fff;
  font-family: "Liberation Sans", sans-serif;
  font-weight: 400;
`

const Handle = styled.div`
  position: absolute;
  left: 0;
  top: 380px;
  display: flex;
  align-items: center;
  justify-content: center;
  width: 16px;
  height: 62px;
  background: #4a4a4a;
  clip-path: polygon(0 0, 60% 3%, 100% 8%, 100% 92%, 60% 97%, 0 100%);
`

const DialogBox = styled.div`
  position: absolute;
  left: 0;
  top: 0;
  display: flex;
  flex-direction: column;
  width: 302px;
  height: 329px;
  padding: 10px 12px 0;
  border: 1px solid #c4c4c4;
  background: rgba(240, 240, 240, 0.94);
  backdrop-filter: blur(12px);
  box-shadow: 2px 3px 8px rgba(0, 0, 0, 0.3);
`

const DialogTitle = styled.div`
  height: 20px;
  line-height: 20px;
  font-size: 14px;
  margin-left: -1px;
  color: #444;
`

const DialogRadios = styled.div`
  display: flex;
  gap: 18px;
  align-items: center;
  height: 20px;
  margin-top: 7px;
  ${RadioItem} { gap: 4px; }
  ${Radio} { width: 15px; height: 15px; }
`

const RebarSet = styled.fieldset`
  flex: none;
  width: 278px;
  height: 221px;
  margin: 6px 0 0 -1px;
  padding: 22px 9px 0;
  border: 1px solid #c8c8c8;
  border-radius: 3px;
  background: #fff;
`

const RebarLegend = styled.legend`
  margin-left: 8px;
  padding: 0 1px;
  height: 16px;
  line-height: 16px;
  color: #555;
`

const FieldRow = styled.div`
  display: flex;
  align-items: center;
  justify-content: space-between;
  color: #555;
`

const FieldLabel = styled.span`
  white-space: nowrap;
`

const Combo = styled.div`
  display: flex;
  align-items: center;
  flex: none;
  width: ${p => p.$w}px;
  height: 26px;
  padding: 0 7px 0 6px;
  border: 1px solid #c8c8c8;
  border-radius: 3px;
  background: #fff;
`

const TextCursor = styled.i`
  display: block;
  width: 1px;
  height: 16px;
  background: #222;
`

const ComboText = styled.span`
  margin-left: -3px;
  color: #444;
`

const DialogFoot = styled.div`
  display: flex;
  align-items: center;
  justify-content: space-between;
  margin: 7px -1px 0 0;
`

const CheckWrap = styled.div`
  display: flex;
  align-items: center;
  gap: 3px;
  color: #555;
`

const CheckBox = styled.span`
  display: flex;
  align-items: center;
  justify-content: center;
  width: 14px;
  height: 14px;
  border-radius: 2px;
  background: #2f7fe6;
`

const ScribbleLayer = styled.svg`
  position: absolute;
  left: 0;
  top: 0;
  pointer-events: none;
`

const RedBox = styled.rect`
  stroke: #f5333a;
  stroke-width: 3;
  stroke-linejoin: miter;
`
